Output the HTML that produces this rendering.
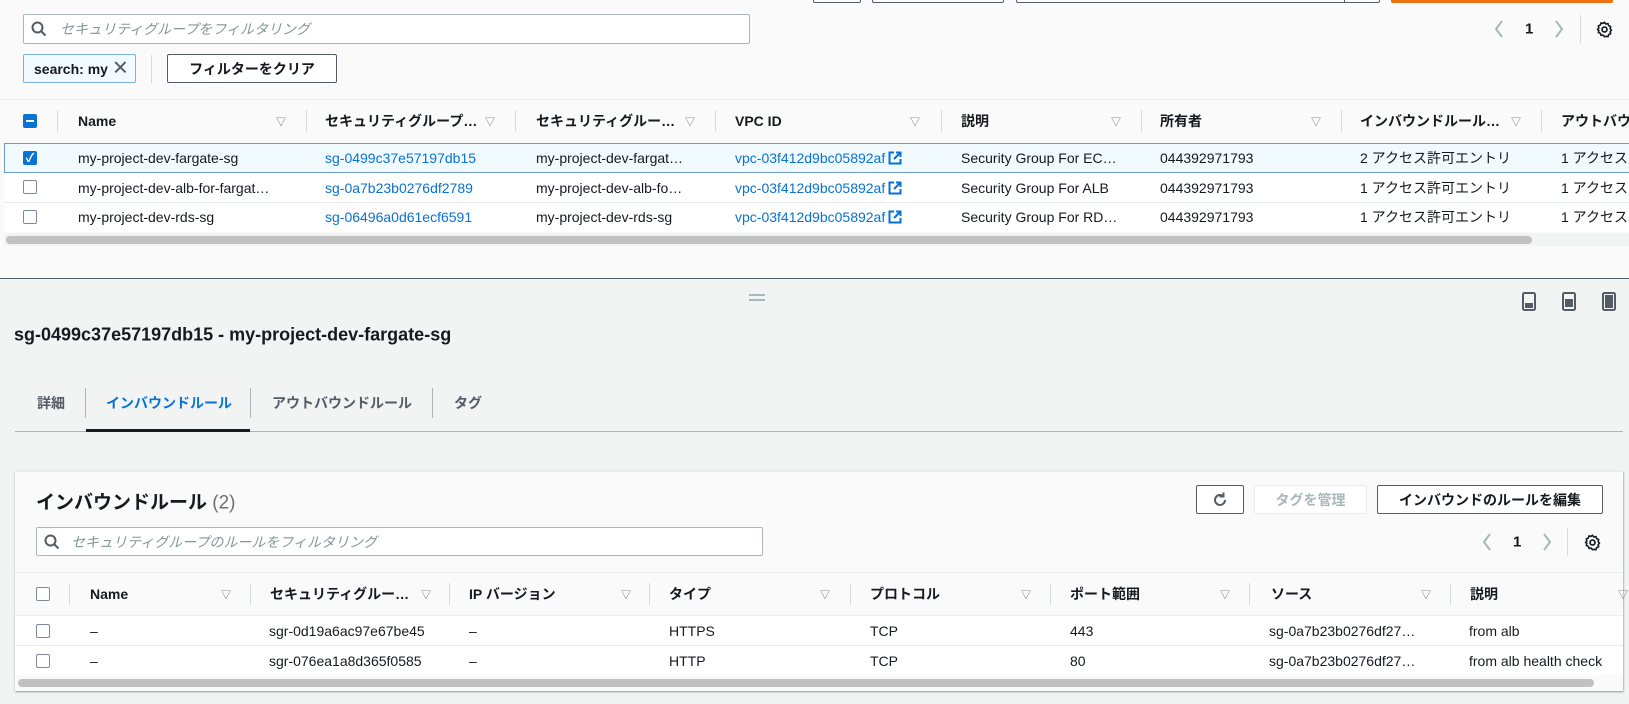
<!DOCTYPE html>
<html><head><meta charset="utf-8"><style>
*{box-sizing:border-box;margin:0;padding:0}
body{width:1629px;height:704px;overflow:hidden;background:#f2f3f3;font-family:"Liberation Sans","Noto Sans CJK JP",sans-serif;color:#16191f;font-size:14px;position:relative}
.a{position:absolute;white-space:nowrap}
.top{position:absolute;left:0;top:0;width:1629px;height:279px;background:#fafafa;border-bottom:1px solid #545b64}
.box{position:absolute;border:1px solid #7d8998;border-radius:2px;background:#fff}
.vt{position:absolute;width:1px;background:#d5dbdb}
.hd{font-weight:bold;transform:translateY(-50%)}
.c{transform:translateY(-50%)}
.srt{position:absolute;transform:translateY(-50%);color:#687078;font-size:10px}
.lnk{color:#0972d3}
.cb{position:absolute;width:14px;height:14px;border:1px solid #7d8998;border-radius:2px;background:#fff}
.btn{position:absolute;border:1px solid #545b64;border-radius:2px;background:#fff;font-weight:bold;font-size:14px;display:flex;align-items:center;justify-content:center}
.hl{position:absolute;height:1px;background:#eaeded}
.ext{display:inline-block;vertical-align:-2px;margin-left:3px}
</style></head><body>
<div class="top">
  <div class="box" style="left:813px;top:-20px;width:48px;height:23px;border-color:#545b64"></div>
  <div class="box" style="left:872px;top:-20px;width:132px;height:23px;border-color:#545b64"></div>
  <div class="box" style="left:1016px;top:-20px;width:364px;height:23px;border-color:#545b64"></div>
  <div class="vt" style="left:1344px;top:0;height:3px;background:#545b64"></div>
  <div style="position:absolute;left:1391px;top:-20px;width:222px;height:23px;background:#ec7211;border-radius:2px"></div>

  <div class="box" style="left:23px;top:14px;width:727px;height:30px;border-color:#aab7b8"></div>
  <svg class="a" style="left:31px;top:21px" width="16" height="16" viewBox="0 0 16 16"><circle cx="6.5" cy="6.5" r="5" fill="none" stroke="#545b64" stroke-width="2"/><path d="M10 10l4.5 4.5" stroke="#545b64" stroke-width="2"/></svg>
  <div class="a c" style="left:60px;top:29px;color:#879596;font-style:italic">セキュリティグループをフィルタリング</div>

  <div style="position:absolute;left:23px;top:54px;width:113px;height:29px;background:#f1faff;border:1px solid #7fb0d9;border-radius:2px"></div>
  <div class="a c" style="left:34px;top:69px;font-weight:bold;font-size:14px">search: my</div>
  <div class="a c" style="left:112px;top:68px;font-size:20px;color:#545b64">✕</div>
  <div class="vt" style="left:151px;top:55px;height:28px"></div>
  <div class="btn" style="left:167px;top:54px;width:170px;height:29px">フィルターをクリア</div>

  <svg class="a" style="left:1494px;top:20px" width="10" height="18"><path d="M8 1L2 9l6 8" fill="none" stroke="#aab7b8" stroke-width="2"/></svg>
  <div class="a c" style="left:1525px;top:29px;font-weight:bold;font-size:15px">1</div>
  <svg class="a" style="left:1554px;top:20px" width="10" height="18"><path d="M2 1l6 8-6 8" fill="none" stroke="#aab7b8" stroke-width="2"/></svg>
  <div class="vt" style="left:1580px;top:15px;height:28px"></div>
  <svg class="a" style="left:1596px;top:21px" width="17" height="17" viewBox="0 0 16 16"><circle cx="8" cy="8" r="2.3" fill="none" stroke="#16191f" stroke-width="1.6"/><path d="M8 1.2l1.3 1.6 2-.4.6 2 1.9.8-.5 2 1.3 1.4-1.3 1.4.5 2-1.9.8-.6 2-2-.4L8 14.8l-1.3-1.6-2 .4-.6-2-1.9-.8.5-2L1.4 8l1.3-1.4-.5-2 1.9-.8.6-2 2 .4z" fill="none" stroke="#16191f" stroke-width="1.5" stroke-linejoin="round"/></svg>

  <div class="hl" style="left:0;top:99px;width:1629px"></div>
  <div style="position:absolute;left:23px;top:114px;width:14px;height:14px;background:#0972d3;border-radius:2px"><div style="position:absolute;left:3px;top:6px;width:8px;height:2px;background:#fff"></div></div>
  <div class="vt" style="left:57px;top:110px;height:22px"></div>
  <div class="a hd" style="left:78px;top:121px">Name</div><div class="srt" style="left:276px;top:121px">▽</div>
  <div class="vt" style="left:306px;top:110px;height:22px"></div>
  <div class="a hd" style="left:325px;top:121px">セキュリティグループ…</div><div class="srt" style="left:485px;top:121px">▽</div>
  <div class="vt" style="left:515px;top:110px;height:22px"></div>
  <div class="a hd" style="left:536px;top:121px">セキュリティグルー…</div><div class="srt" style="left:685px;top:121px">▽</div>
  <div class="vt" style="left:715px;top:110px;height:22px"></div>
  <div class="a hd" style="left:735px;top:121px">VPC ID</div><div class="srt" style="left:910px;top:121px">▽</div>
  <div class="vt" style="left:941px;top:110px;height:22px"></div>
  <div class="a hd" style="left:961px;top:121px">説明</div><div class="srt" style="left:1111px;top:121px">▽</div>
  <div class="vt" style="left:1141px;top:110px;height:22px"></div>
  <div class="a hd" style="left:1160px;top:121px">所有者</div><div class="srt" style="left:1311px;top:121px">▽</div>
  <div class="vt" style="left:1341px;top:110px;height:22px"></div>
  <div class="a hd" style="left:1360px;top:121px">インバウンドルール…</div><div class="srt" style="left:1511px;top:121px">▽</div>
  <div class="vt" style="left:1541px;top:110px;height:22px"></div>
  <div class="a hd" style="left:1561px;top:121px">アウトバウンド</div>

  <div style="position:absolute;left:4px;top:143px;width:1640px;height:30px;background:#f1faff;border:1px solid #6c9ccc"></div>
  <div style="position:absolute;left:4px;top:173px;width:1640px;height:59px;background:#fff"></div>
  <div class="hl" style="left:4px;top:202px;width:1640px"></div>

  <div style="position:absolute;left:23px;top:151px;width:14px;height:14px;background:#0972d3;border-radius:2px;color:#fff;font-size:12px;line-height:14px;text-align:center;font-weight:bold">✓</div>
  <div class="cb" style="left:23px;top:180px"></div>
  <div class="cb" style="left:23px;top:210px"></div>

  <div class="a c" style="left:78px;top:158px">my-project-dev-fargate-sg</div>
  <div class="a c lnk" style="left:325px;top:158px">sg-0499c37e57197db15</div>
  <div class="a c" style="left:536px;top:158px">my-project-dev-fargat…</div>
  <div class="a c lnk" style="left:735px;top:158px">vpc-03f412d9bc05892af<svg class="ext" width="14" height="14" viewBox="0 0 14 14"><path d="M6 1.5H1.5v11h11V8M8 1.5h4.5V6M12.5 1.5L6 8" fill="none" stroke="#0972d3" stroke-width="2"/></svg></div>
  <div class="a c" style="left:961px;top:158px">Security Group For EC…</div>
  <div class="a c" style="left:1160px;top:158px">044392971793</div>
  <div class="a c" style="left:1360px;top:158px">2 アクセス許可エントリ</div>
  <div class="a c" style="left:1561px;top:158px">1 アクセス</div>

  <div class="a c" style="left:78px;top:188px">my-project-dev-alb-for-fargat…</div>
  <div class="a c lnk" style="left:325px;top:188px">sg-0a7b23b0276df2789</div>
  <div class="a c" style="left:536px;top:188px">my-project-dev-alb-fo…</div>
  <div class="a c lnk" style="left:735px;top:188px">vpc-03f412d9bc05892af<svg class="ext" width="14" height="14" viewBox="0 0 14 14"><path d="M6 1.5H1.5v11h11V8M8 1.5h4.5V6M12.5 1.5L6 8" fill="none" stroke="#0972d3" stroke-width="2"/></svg></div>
  <div class="a c" style="left:961px;top:188px">Security Group For ALB</div>
  <div class="a c" style="left:1160px;top:188px">044392971793</div>
  <div class="a c" style="left:1360px;top:188px">1 アクセス許可エントリ</div>
  <div class="a c" style="left:1561px;top:188px">1 アクセス</div>

  <div class="a c" style="left:78px;top:217px">my-project-dev-rds-sg</div>
  <div class="a c lnk" style="left:325px;top:217px">sg-06496a0d61ecf6591</div>
  <div class="a c" style="left:536px;top:217px">my-project-dev-rds-sg</div>
  <div class="a c lnk" style="left:735px;top:217px">vpc-03f412d9bc05892af<svg class="ext" width="14" height="14" viewBox="0 0 14 14"><path d="M6 1.5H1.5v11h11V8M8 1.5h4.5V6M12.5 1.5L6 8" fill="none" stroke="#0972d3" stroke-width="2"/></svg></div>
  <div class="a c" style="left:961px;top:217px">Security Group For RD…</div>
  <div class="a c" style="left:1160px;top:217px">044392971793</div>
  <div class="a c" style="left:1360px;top:217px">1 アクセス許可エントリ</div>
  <div class="a c" style="left:1561px;top:217px">1 アクセス</div>

  <div style="position:absolute;left:4px;top:233px;width:1640px;height:13px;background:#f2f3f3"></div>
  <div style="position:absolute;left:6px;top:236px;width:1526px;height:8px;background:#c1c1c1;border-radius:4px"></div>
</div>

<div class="a" style="left:749px;top:294px;width:16px;height:2px;background:#aab7b8"></div>
<div class="a" style="left:749px;top:299px;width:16px;height:2px;background:#aab7b8"></div>
<svg class="a" style="left:1522px;top:292px" width="14" height="19"><rect x="1" y="1" width="12" height="17" rx="1.5" fill="none" stroke="#545b64" stroke-width="2"/><rect x="3" y="11" width="8" height="5" fill="#545b64"/></svg>
<svg class="a" style="left:1562px;top:292px" width="14" height="19"><rect x="1" y="1" width="12" height="17" rx="1.5" fill="none" stroke="#545b64" stroke-width="2"/><rect x="3" y="7" width="8" height="8" fill="#545b64"/></svg>
<svg class="a" style="left:1602px;top:292px" width="14" height="19"><rect x="1" y="1" width="12" height="17" rx="1.5" fill="none" stroke="#545b64" stroke-width="2"/><rect x="3" y="3" width="8" height="13" fill="#545b64"/></svg>

<div class="a c" style="left:14px;top:335px;font-size:18px;font-weight:bold">sg-0499c37e57197db15 - my-project-dev-fargate-sg</div>

<div class="a c" style="left:37px;top:403px;font-weight:bold;color:#545b64">詳細</div>
<div class="vt" style="left:85px;top:388px;height:30px;background:#aab7b8"></div>
<div class="a c" style="left:106px;top:403px;font-weight:bold;color:#0972d3">インバウンドルール</div>
<div class="vt" style="left:250px;top:388px;height:30px;background:#aab7b8"></div>
<div class="a c" style="left:272px;top:403px;font-weight:bold;color:#545b64">アウトバウンドルール</div>
<div class="vt" style="left:432px;top:388px;height:30px;background:#aab7b8"></div>
<div class="a c" style="left:454px;top:403px;font-weight:bold;color:#545b64">タグ</div>
<div class="a" style="left:15px;top:431px;width:1608px;height:1px;background:#aab7b8"></div>
<div class="a" style="left:86px;top:429px;width:164px;height:3px;background:#16191f"></div>

<div class="a" style="left:15px;top:471px;width:1608px;height:220px;background:#fafafa;box-shadow:0 1px 2px rgba(0,28,36,.3),1px 1px 1px rgba(0,28,36,.15);border-top:1px solid #eaeded"></div>
<div class="a c" style="left:36px;top:501px;font-size:19px;font-weight:bold">インバウンドルール <span style="font-weight:normal;color:#687078">(2)</span></div>

<div class="btn" style="left:1196px;top:485px;width:48px;height:29px"><svg width="18" height="18" viewBox="0 0 18 18"><path d="M14 9a5 5 0 1 1-2-4" fill="none" stroke="#545b64" stroke-width="2"/><path d="M12.5 1.5v4h-4" fill="none" stroke="#545b64" stroke-width="2"/></svg></div>
<div class="btn" style="left:1254px;top:485px;width:113px;height:29px;border-color:#e9ebed;color:#aab7b8">タグを管理</div>
<div class="btn" style="left:1377px;top:485px;width:226px;height:29px">インバウンドのルールを編集</div>

<div class="box" style="left:36px;top:527px;width:727px;height:29px;border-color:#aab7b8"></div>
<svg class="a" style="left:44px;top:534px" width="16" height="16" viewBox="0 0 16 16"><circle cx="6.5" cy="6.5" r="5" fill="none" stroke="#545b64" stroke-width="2"/><path d="M10 10l4.5 4.5" stroke="#545b64" stroke-width="2"/></svg>
<div class="a c" style="left:71px;top:542px;color:#879596;font-style:italic">セキュリティグループのルールをフィルタリング</div>

<svg class="a" style="left:1482px;top:533px" width="10" height="18"><path d="M8 1L2 9l6 8" fill="none" stroke="#aab7b8" stroke-width="2"/></svg>
<div class="a c" style="left:1513px;top:542px;font-weight:bold;font-size:15px">1</div>
<svg class="a" style="left:1542px;top:533px" width="10" height="18"><path d="M2 1l6 8-6 8" fill="none" stroke="#aab7b8" stroke-width="2"/></svg>
<div class="vt" style="left:1567px;top:528px;height:28px"></div>
<svg class="a" style="left:1584px;top:534px" width="17" height="17" viewBox="0 0 16 16"><circle cx="8" cy="8" r="2.3" fill="none" stroke="#16191f" stroke-width="1.6"/><path d="M8 1.2l1.3 1.6 2-.4.6 2 1.9.8-.5 2 1.3 1.4-1.3 1.4.5 2-1.9.8-.6 2-2-.4L8 14.8l-1.3-1.6-2 .4-.6-2-1.9-.8.5-2L1.4 8l1.3-1.4-.5-2 1.9-.8.6-2 2 .4z" fill="none" stroke="#16191f" stroke-width="1.5" stroke-linejoin="round"/></svg>

<div class="hl" style="left:15px;top:572px;width:1608px"></div>
<div class="cb" style="left:36px;top:587px"></div>
<div class="vt" style="left:69px;top:583px;height:22px"></div>
<div class="a hd" style="left:90px;top:594px">Name</div><div class="srt" style="left:221px;top:594px">▽</div>
<div class="vt" style="left:250px;top:583px;height:22px"></div>
<div class="a hd" style="left:270px;top:594px">セキュリティグルー…</div><div class="srt" style="left:421px;top:594px">▽</div>
<div class="vt" style="left:449px;top:583px;height:22px"></div>
<div class="a hd" style="left:469px;top:594px">IP バージョン</div><div class="srt" style="left:621px;top:594px">▽</div>
<div class="vt" style="left:649px;top:583px;height:22px"></div>
<div class="a hd" style="left:669px;top:594px">タイプ</div><div class="srt" style="left:820px;top:594px">▽</div>
<div class="vt" style="left:850px;top:583px;height:22px"></div>
<div class="a hd" style="left:870px;top:594px">プロトコル</div><div class="srt" style="left:1021px;top:594px">▽</div>
<div class="vt" style="left:1050px;top:583px;height:22px"></div>
<div class="a hd" style="left:1070px;top:594px">ポート範囲</div><div class="srt" style="left:1220px;top:594px">▽</div>
<div class="vt" style="left:1249px;top:583px;height:22px"></div>
<div class="a hd" style="left:1271px;top:594px">ソース</div><div class="srt" style="left:1421px;top:594px">▽</div>
<div class="vt" style="left:1450px;top:583px;height:22px"></div>
<div class="a hd" style="left:1470px;top:594px">説明</div><div class="srt" style="left:1618px;top:594px">▽</div>

<div class="a" style="left:15px;top:615px;width:1608px;height:60px;background:#fff;border-top:1px solid #eaeded"></div>
<div class="hl" style="left:15px;top:645px;width:1608px"></div>
<div class="cb" style="left:36px;top:624px"></div>
<div class="cb" style="left:36px;top:654px"></div>
<div class="a c" style="left:90px;top:631px">–</div>
<div class="a c" style="left:269px;top:631px">sgr-0d19a6ac97e67be45</div>
<div class="a c" style="left:469px;top:631px">–</div>
<div class="a c" style="left:669px;top:631px">HTTPS</div>
<div class="a c" style="left:870px;top:631px">TCP</div>
<div class="a c" style="left:1070px;top:631px">443</div>
<div class="a c" style="left:1269px;top:631px">sg-0a7b23b0276df27…</div>
<div class="a c" style="left:1469px;top:631px">from alb</div>
<div class="a c" style="left:90px;top:661px">–</div>
<div class="a c" style="left:269px;top:661px">sgr-076ea1a8d365f0585</div>
<div class="a c" style="left:469px;top:661px">–</div>
<div class="a c" style="left:669px;top:661px">HTTP</div>
<div class="a c" style="left:870px;top:661px">TCP</div>
<div class="a c" style="left:1070px;top:661px">80</div>
<div class="a c" style="left:1269px;top:661px">sg-0a7b23b0276df27…</div>
<div class="a c" style="left:1469px;top:661px">from alb health check</div>
<div class="a" style="left:18px;top:679px;width:1576px;height:8px;background:#c1c1c1;border-radius:4px"></div>
</body></html>
